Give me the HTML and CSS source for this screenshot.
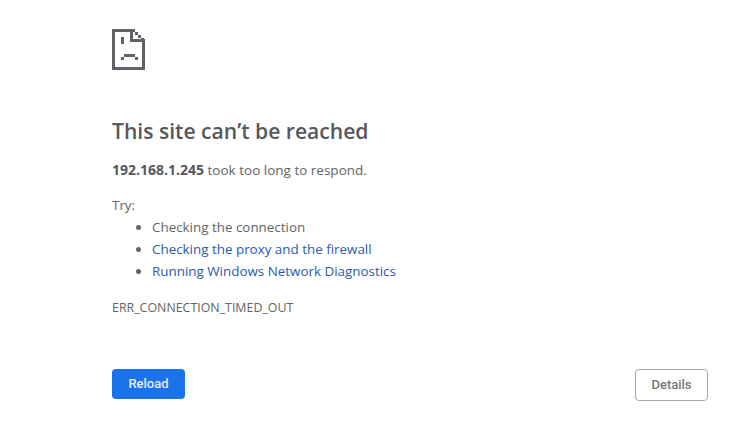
FILE: index.html
```html
<!DOCTYPE html>
<html lang="en">
<head>
    <meta charset="UTF-8">
    <title>192.168.1.245</title>
    <link rel="stylesheet" href="styles.css">
</head>
<body>

<div class="container">
    <svg class="sad-page" width="33" height="42" viewBox="0 0 33 42" fill="#5f6368">
        <!-- page outline, fold steps down the top right corner -->
        <path d="M0 0H23V3H3V38H30V13H18V0H21V10H30V10H33V41H0Z"/>
        <rect x="23" y="3" width="3" height="3"/>
        <rect x="26" y="6" width="3" height="3"/>
        <rect x="29" y="9" width="3" height="2"/>
        <!-- eye -->
        <rect x="9" y="8" width="3" height="7"/>
        <!-- frown -->
        <rect x="12" y="25" width="11" height="3"/>
        <rect x="9" y="28" width="3" height="3"/>
        <rect x="23" y="28" width="3" height="3"/>
    </svg>

    <h1>This site can’t be reached</h1>
    <p class="summary"><strong>192.168.1.245</strong> took too long to respond.</p>

    <div class="suggestions">
        <p>Try:</p>
        <ul>
            <li>Checking the connection</li>
            <li><a href="#">Checking the proxy and the firewall</a></li>
            <li><a href="#">Running Windows Network Diagnostics</a></li>
        </ul>
    </div>

    <div class="error-code">ERR_CONNECTION_TIMED_OUT</div>

    <div class="buttons">
        <button class="btn btn-primary">Reload</button>
        <button class="btn btn-secondary">Details</button>
    </div>
</div>

</body>
</html>
```

FILE: styles.css
```css
body {
    margin: 0;
    background-color: #ffffff;
    color: #646464;
    font-family: 'Open Sans', 'Noto Sans', sans-serif;
    font-size: 13.4px;
}
.container {
    padding: 29px 42px 0 112px;
}
.sad-page {
    display: block;
}
h1 {
    margin: 44px 0 0;
    color: #55585c;
    font-size: 21.1px;
    font-weight: 600;
    line-height: 32px;
}
.summary {
    margin: 13px 0 0;
    font-size: 13.5px;
    line-height: 20px;
}
.summary strong {
    color: #55585c;
    font-size: 14px;
}
.suggestions {
    margin-top: 15px;
    line-height: 22px;
}
.suggestions p {
    margin: 0;
    line-height: 21px;
}
ul {
    margin: 0;
    padding-left: 40px;
}
a {
    color: #2a5ba8;
    text-decoration: none;
}
.error-code {
    margin-top: 18px;
    font-size: 12.4px;
    line-height: 16px;
}
.buttons {
    display: flex;
    justify-content: space-between;
    align-items: flex-start;
    margin-top: 53px;
}
.btn {
    padding: 0 0 2px;
    border-radius: 4px;
    font-family: Roboto, Arial, sans-serif;
    font-size: 13px;
    font-weight: 500;
}
.btn-primary {
    width: 73px;
    height: 30px;
    border: 0;
    background-color: #1a73e8;
    color: #e4efff;
}
.btn-secondary {
    width: 73px;
    height: 32px;
    border: 1px solid #a8a8a8;
    background-color: #ffffff;
    color: #767676;
}
```
